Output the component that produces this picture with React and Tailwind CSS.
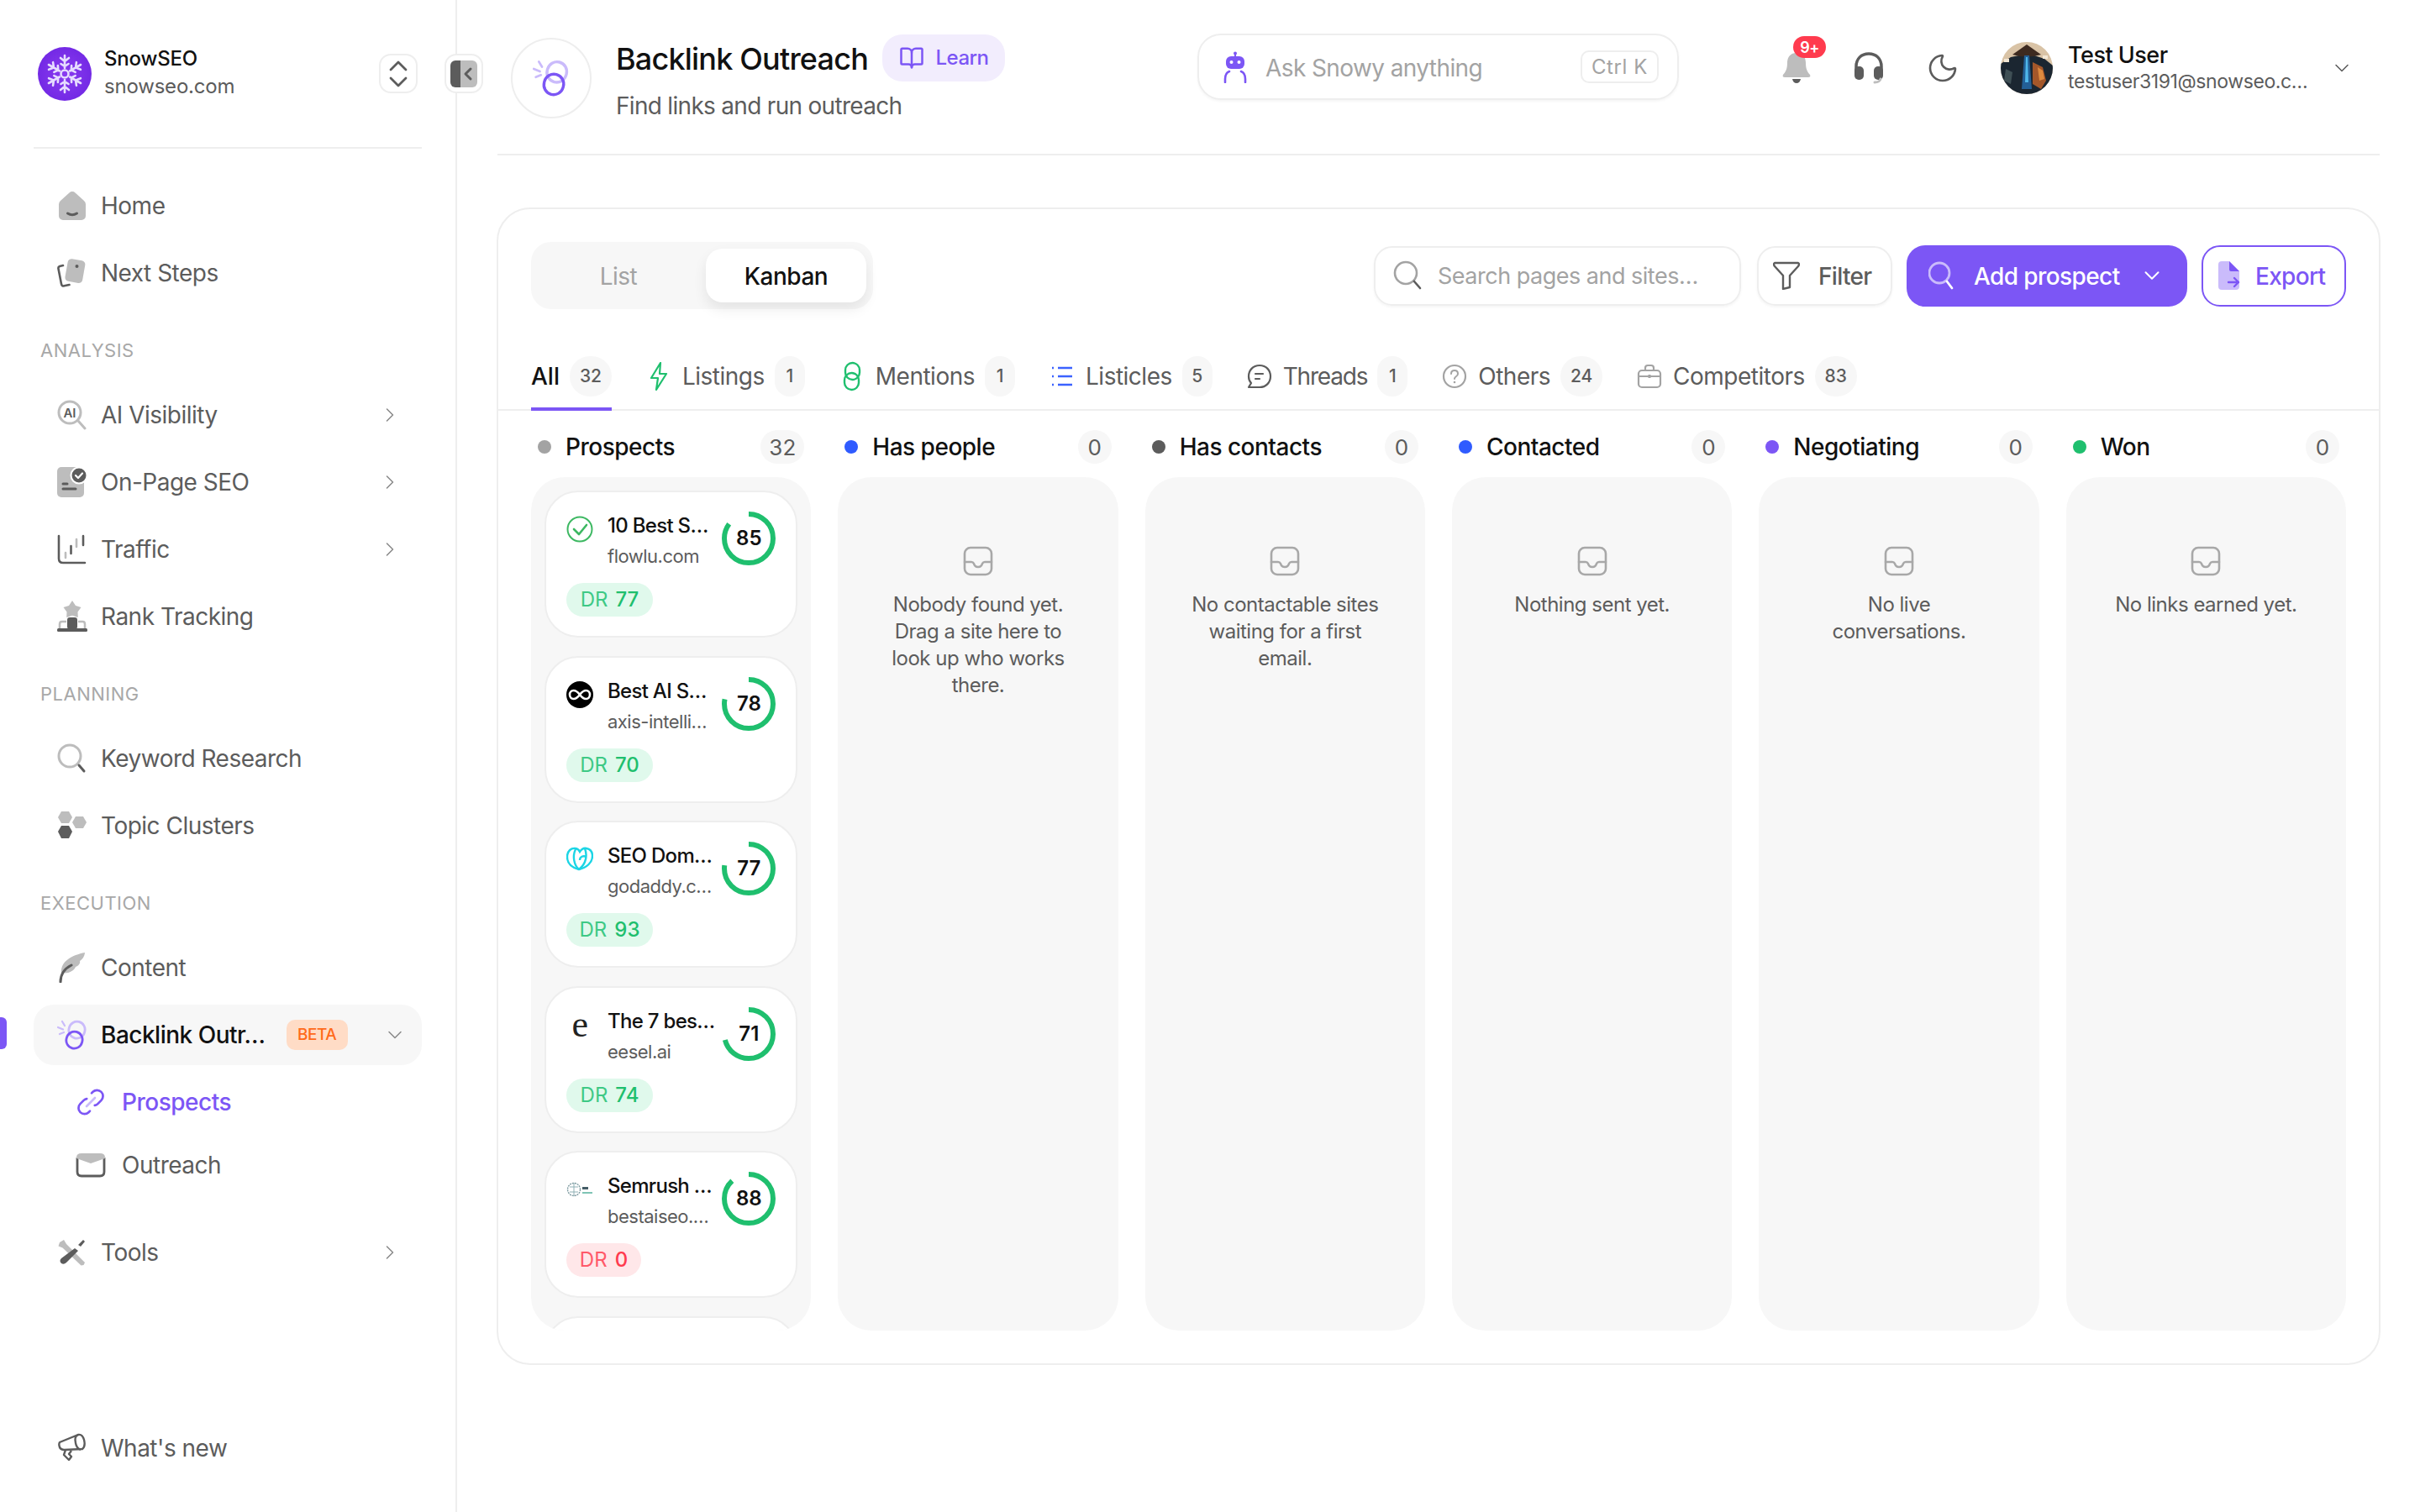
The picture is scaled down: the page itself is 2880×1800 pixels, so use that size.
import React from "react";
import { ChevronRight, ChevronDown, BookOpen, Moon } from "lucide-react";

const D = "#5c5c5c";
const L = "#bdbdbd";
const P = "#7c56f5";
const PL = "#cabbfb";
const G = "#1fbf6e";

const Svg = ({ w = 32, h = 32, vb, children, className = "" }) => (
  <svg width={w} height={h} viewBox={vb || `0 0 ${w} ${h}`} fill="none" className={`shrink-0 ${className}`}>
    {children}
  </svg>
);

const HomeI = () => (
  <Svg w={32} h={34}>
    <path d="M12.5 1.5a5 5 0 0 1 7 0l10 9a6 6 0 0 1 2.5 4.5V29a5 5 0 0 1-5 5H5a5 5 0 0 1-5-5V15a6 6 0 0 1 2.5-4.5z" fill={L} />
    <path d="M10.5 26q5.500 3.500 11 0" stroke={D} strokeWidth="3" strokeLinecap="round" />
  </Svg>
);
const NextI = () => (
  <Svg w={36} h={36}>
    <path d="M7 9 3 10q-2 .7-1.500 3l3.500 18q.5 3 3.500 2.300l6-1.300" stroke={D} strokeWidth="2.600" strokeLinecap="round" />
    <rect x="11" y="2" width="21" height="27" rx="4.500" fill={L} transform="rotate(10 21 15)" />
    <circle cx="23.500" cy="10" r="2" fill={D} />
  </Svg>
);
const AiI = () => (
  <Svg w={36} h={36}>
    <circle cx="15" cy="15" r="13" stroke={L} strokeWidth="3" />
    <path d="m25 25 8 9" stroke={L} strokeWidth="3" strokeLinecap="round" />
    <text x="15" y="20.500" textAnchor="middle" fontFamily="Inter, sans-serif" fontWeight="600" fontSize="15" letterSpacing="0" fill={D}>AI</text>
  </Svg>
);
const PageI = () => (
  <Svg w={36} h={36}>
    <rect x="0" y="0" width="32" height="36" rx="5" fill={L} />
    <path d="M7 20h5M7 26h15" stroke={D} strokeWidth="3" strokeLinecap="round" />
    <circle cx="26" cy="10" r="9.500" fill={D} stroke="#fff" strokeWidth="2" />
    <path d="m22 10 3 3 5-5.500" stroke="#fff" strokeWidth="2.200" strokeLinecap="round" strokeLinejoin="round" />
  </Svg>
);
const TrafficI = () => (
  <Svg w={36} h={36}>
    <path d="M2 2v27q0 5 5 5h26" stroke={D} strokeWidth="2.600" strokeLinecap="round" />
    <path d="M10 22v6M23 6v9" stroke={L} strokeWidth="2.600" strokeLinecap="round" />
    <path d="M16.500 14v9M31 2v11" stroke={D} strokeWidth="2.600" strokeLinecap="round" />
  </Svg>
);
const RankI = () => (
  <Svg w={36} h={38}>
    <path d="m18 0 4 6 6.500 2-4 5.500.3 6.500-6.800-2.200L11.200 20l.3-6.500-4-5.500L14 6z" fill={L} />
    <rect x="12" y="20" width="12" height="14" rx="3" fill={D} />
    <path d="M11 25H5.500Q3 25 3 28v5M25 25h5.500Q33 25 33 28v5" stroke={L} strokeWidth="2.500" />
    <rect x="0" y="33" width="36" height="4" rx="1.500" fill={D} />
  </Svg>
);
const KeyI = () => (
  <Svg w={36} h={36}>
    <circle cx="15" cy="15" r="13" stroke={L} strokeWidth="3" />
    <path d="m26 26 6 7" stroke={D} strokeWidth="3" strokeLinecap="round" />
  </Svg>
);
const TopicI = () => (
  <Svg w={36} h={36}>
    <path d="M5 1h9l4 7-4 7H5L1 8z" fill={L} strokeLinejoin="round" />
    <path d="M22 7h9l4 7-4 7h-9l-4-7z" fill={L} />
    <path d="M5 18h9l4 7-4 8H5l-4-8z" fill={D} />
  </Svg>
);
const ContentI = () => (
  <Svg w={32} h={36}>
    <path d="M3 24C2 10 16 3 31 0c-.5 5-3 8-6 10 1 3-2 6-5 7-2 5-10 9-17 7z" fill={L} />
    <path d="M2 35c0-8 3-15 13-20" stroke={D} strokeWidth="3" strokeLinecap="round" />
  </Svg>
);
const LinkDuo = ({ w = 36, h = 36 }) => (
  <Svg w={w} h={h} vb="0 0 36 36">
    <path d="M1 9l6 2.500M3 17l5-2M6 2l3 5" stroke={PL} strokeWidth="2.200" strokeLinecap="round" />
    <rect x="14" y="2" width="19" height="20" rx="9.500" stroke={PL} strokeWidth="2.800" transform="rotate(15 23 12)" />
    <rect x="11" y="14" width="19" height="20" rx="9.500" stroke={P} strokeWidth="2.800" transform="rotate(15 20 24)" />
  </Svg>
);
const ProsI = () => (
  <Svg w={36} h={34} vb="0 0 24 24">
    <path d="M12.700 4.500l1.100-1.100a5 5 0 0 1 7.070 7.070l-3 3a5 5 0 0 1-2.500 1.300" stroke={P} strokeWidth="1.900" strokeLinecap="round" />
    <path d="M11.300 19.500l-1.100 1.100a5 5 0 0 1-7.070-7.070l3-3a5 5 0 0 1 2.500-1.300" stroke={P} strokeWidth="1.900" strokeLinecap="round" />
    <path d="M8.500 15.500l7-7" stroke={PL} strokeWidth="1.900" strokeLinecap="round" />
  </Svg>
);
const MailI = () => (
  <Svg w={36} h={32}>
    <path d="M2 7v17q0 5 5 5h22q5 0 5-5V7" stroke={D} strokeWidth="2.800" />
    <path d="M1 7q0-5 6-5h22q6 0 6 5v1L18 14 1 8z" fill={L} />
  </Svg>
);
const ToolsI = () => (
  <Svg w={34} h={34}>
    <path d="M2 5 7 2l3 5 20 20 2 2-1.500 3-3 .5-22-21-5-2z" fill={L} />
    <path d="M30 2l2 2-5 6-3-2zM20 12l4 3-14 14q-3 3-6 1-3-3 0-6z" fill={D} />
  </Svg>
);
const MegaI = () => (
  <Svg w={34} h={36}>
    <path d="M2 11 24 2q5-1 7 6 2 8-2 11l-22 1q-5-.5-5.500-5Q1 13 2 11z" stroke={D} strokeWidth="2.400" strokeLinejoin="round" />
    <path d="M24 2q-5 2-3 10 1 6 6 8" stroke={D} strokeWidth="2.400" />
    <path d="M9 20 7 26l6 6 3-4-3-3 3-4" stroke={D} strokeWidth="2.400" strokeLinejoin="round" />
  </Svg>
);

const Flake = () => (
  <svg width="44" height="48" viewBox="-22 -24 44 48" fill="none" stroke="#e6dcff" strokeWidth="2.600" strokeLinecap="round">
    <circle r="4.500" />
    {[0, 60, 120, 180, 240, 300].map((r) => (
      <g key={r} transform={`rotate(${r})`}>
        <path d="M0-7V-22M-5-19l5 4 5-4M-4.500-12 0-9l4.500-3" />
      </g>
    ))}
  </svg>
);

const NavRow = ({ icon, label, chev, className = "" }) => (
  <div className={`flex h-[72px] items-center rounded-[24px] pl-7 pr-6 ${className}`}>
    <div className="flex w-[36px] shrink-0 items-center justify-center">{icon}</div>
    <span className="ml-4 text-[28px] text-[#5c5c5c]">{label}</span>
    {chev && <ChevronRight size={28} strokeWidth={1.3} color="#8a8a8a" className="ml-auto" />}
  </div>
);

const Label = ({ children }) => (
  <div className="mt-10 mb-[25px] flex h-8 items-center pl-2 text-[22px] tracking-[0.5px] text-[#a8a8a8]">{children}</div>
);

const Sidebar = () => (
  <aside className="relative flex h-[1800px] w-[544px] shrink-0 flex-col border-r-2 border-[#eeeeee] px-10">
    <div className="flex h-[177px] shrink-0 items-start border-b-2 border-[#eeeeee] pt-14 pl-[5px]">
      <div className="flex h-16 w-16 shrink-0 items-center justify-center rounded-full bg-[radial-gradient(circle,#8a3cf0,#6a22e0)]">
        <Flake />
      </div>
      <div className="ml-[15px] -mt-0.5 flex flex-col">
        <span className="text-[24px] leading-[32px] font-medium tracking-[-0.2px] text-[#111111]">SnowSEO</span>
        <span className="text-[24px] leading-[34px] tracking-[-0.2px] text-[#5c5c5c]">snowseo.com</span>
      </div>
      <div className="mt-2 ml-auto mr-[5px] flex h-[47px] w-[46px] items-center justify-center rounded-[14px] border-2 border-[#eeeeee] bg-white">
        <svg width="22" height="32" viewBox="0 0 22 32" fill="none" stroke={D} strokeWidth="2.800" strokeLinecap="round" strokeLinejoin="round">
          <path d="m2 11 9-9 9 9M2 21l9 9 9-9" />
        </svg>
      </div>
    </div>
    <div className="absolute top-16 left-[529px] flex h-[47px] w-[46px] items-center justify-center rounded-[14px] border-2 border-[#eeeeee] bg-white">
      <svg width="32" height="32" viewBox="0 0 32 32">
        <path d="M12 0H6a6 6 0 0 0-6 6v20a6 6 0 0 0 6 6h6z" fill={D} />
        <path d="M12 0h14a6 6 0 0 1 6 6v20a6 6 0 0 1-6 6H12z" fill={L} />
        <path d="m24 10-6 6 6 6" stroke={D} strokeWidth="3" strokeLinecap="round" strokeLinejoin="round" fill="none" />
      </svg>
    </div>

    <div className="mt-8 flex flex-col gap-2">
      <NavRow icon={<HomeI />} label="Home" />
      <NavRow icon={<NextI />} label="Next Steps" />
    </div>
    <Label>ANALYSIS</Label>
    <div className="flex flex-col gap-2">
      <NavRow icon={<AiI />} label="AI Visibility" chev />
      <NavRow icon={<PageI />} label="On-Page SEO" chev />
      <NavRow icon={<TrafficI />} label="Traffic" chev />
      <NavRow icon={<RankI />} label="Rank Tracking" />
    </div>
    <Label>PLANNING</Label>
    <div className="flex flex-col gap-2">
      <NavRow icon={<KeyI />} label="Keyword Research" />
      <NavRow icon={<TopicI />} label="Topic Clusters" />
    </div>
    <Label>EXECUTION</Label>
    <div className="flex flex-col gap-2">
      <NavRow icon={<ContentI />} label="Content" />
      <div className="relative flex h-[72px] items-center rounded-[24px] bg-[#f7f7f7] pl-7 pr-[18px]">
        <div className="absolute top-[15px] -left-10 h-[38px] w-2 rounded-r-[6px] bg-[#7c56f5]" />
        <div className="flex w-[36px] shrink-0 items-center justify-center"><LinkDuo /></div>
        <span className="ml-4 text-[28px] font-medium text-[#111111]">Backlink Outr…</span>
        <span className="ml-[25px] flex h-[36px] w-[73px] items-center justify-center rounded-[10px] bg-[#ffdcc6] text-[19px] font-medium text-[#ff6a1a]">BETA</span>
        <ChevronDown size={28} strokeWidth={1.3} color="#8a8a8a" className="ml-auto" />
      </div>
    </div>
    <div className="mt-[10px] flex flex-col gap-[7px] pl-[50px]">
      <div className="flex h-[68px] items-center">
        <ProsI /><span className="ml-[19px] text-[28px] font-medium text-[#7c56f5]">Prospects</span>
      </div>
      <div className="flex h-[68px] items-center">
        <MailI /><span className="ml-[19px] text-[28px] text-[#5c5c5c]">Outreach</span>
      </div>
    </div>
    <div className="mt-[34px]"><NavRow icon={<ToolsI />} label="Tools" chev /></div>
    <div className="mt-auto pb-10"><NavRow icon={<MegaI />} label="What's new" /></div>
  </aside>
);

const Robot = () => (
  <Svg w={28} h={38}>
    <circle cx="14" cy="2.500" r="2" fill={P} />
    <path d="M14 3v4" stroke={P} strokeWidth="2" />
    <rect x="3" y="6" width="22" height="15" rx="6" fill={P} />
    <circle cx="9.500" cy="13" r="2" fill="#fff" /><circle cx="18.500" cy="13" r="2" fill="#fff" />
    <path d="M2 37v-4q0-7 5-9M26 37v-4q0-7-5-9" stroke={P} strokeWidth="2.600" strokeLinecap="round" />
  </Svg>
);
const Bell = () => (
  <div className="relative flex h-[36px] w-[36px] items-center justify-center">
    <svg width="34" height="36" viewBox="0 0 34 36">
      <path d="M17 0C9 0 6 6 6 12c0 7-2 11-5 14-1 2 0 3 2 3h28c2 0 3-1 2-3-3-3-5-7-5-14 0-6-3-12-11-12z" fill={L} />
      <path d="M12 31h10q-1 5-5 5t-5-5z" fill={D} />
    </svg>
    <span className="absolute -top-5 left-[14px] flex h-[26px] w-[39px] items-center justify-center rounded-full bg-[#ff3b4e] text-[18px] font-semibold text-white">9+</span>
  </div>
);
const Headset = () => (
  <Svg w={36} h={38}>
    <path d="M3 22v-5C3 8 9 2 18 2s15 6 15 15v5" stroke={D} strokeWidth="3.500" />
    <rect x="1" y="17" width="11" height="16" rx="5" fill={D} />
    <rect x="24" y="17" width="11" height="16" rx="5" fill={D} />
    <path d="M32 32q-1 4-7 4" stroke={L} strokeWidth="3" strokeLinecap="round" />
  </Svg>
);
const Avatar = () => (
  <div className="h-[62px] w-[62px] shrink-0 overflow-hidden rounded-full">
    <svg width="62" height="62" viewBox="0 0 62 62">
      <rect width="62" height="62" fill="#d9c3a6" />
      <path d="M0 26 12 18l10-2 18 0 12 4 10 8v34H0z" fill="#1b2631" />
      <path d="M14 15 31 3l17 12q-17 5-34 0z" fill="#3d2a20" />
      <path d="M28 16h6l3 40h-12z" fill="#235f96" />
      <path d="M30 18h2l1 30h-4z" fill="#4fb7ea" />
      <path d="M38 24l12 6 4 16-6 10-10-6z" fill="#a4572a" />
      <path d="M44 30l6 4 2 10-6 2z" fill="#dd8a3f" />
      <path d="M6 32l8 4-2 14-8-4z" fill="#3f4f55" />
      <path d="M50 16h6v4h-6zM4 20h6v4H4z" fill="#f2e6d4" />
    </svg>
  </div>
);

const Header = () => (
  <header className="flex h-[185px] shrink-0 items-start border-b-2 border-[#eeeeee] pl-4">
    <div className="mt-[45px] flex h-[96px] w-[96px] shrink-0 items-center justify-center rounded-full border-2 border-[#eeeeee]">
      <LinkDuo w={44} h={46} />
    </div>
    <div className="mt-10 ml-[29px] flex w-[465px] shrink-0 flex-col">
      <div className="flex items-center">
        <span className="pt-0.5 text-[36px] leading-[56px] font-medium tracking-[-0.8px] whitespace-nowrap text-[#111111]">Backlink Outreach</span>
        <div className="ml-[17px] flex h-14 w-[146px] shrink-0 items-center justify-center gap-[14px] rounded-[24px] bg-[#f2edfd]">
          <BookOpen size={30} strokeWidth={2} color={P} />
          <span className="text-[24px] font-medium text-[#7c56f5]">Learn</span>
        </div>
      </div>
      <span className="mt-2 text-[28px] leading-[40px] tracking-[-0.7px] whitespace-nowrap text-[#5c5c5c]">Find links and run outreach</span>
    </div>
    <div className="mt-10 ml-[227px] flex h-[79px] w-[573px] shrink-0 items-center rounded-[28px] border-2 border-[#eeeeee] pr-[22px] pl-[29px] shadow-[0_2px_3px_rgba(0,0,0,0.04)]">
      <Robot />
      <span className="ml-[22px] pt-0.5 text-[28px] tracking-[-0.6px] text-[#a3a3a3]">Ask Snowy anything</span>
      <span className="ml-auto flex h-[39px] w-[93px] items-center justify-center rounded-[10px] border-2 border-[#eeeeee] text-[24px] tracking-[0.6px] text-[#a3a3a3]">Ctrl K</span>
    </div>
    <div className="mt-[50px] ml-[122px] flex h-[62px] flex-1 items-center">
      <Bell />
      <div className="ml-[50px]"><Headset /></div>
      <Moon size={40} strokeWidth={1.6} color={D} className="ml-[50px]" />
      <div className="ml-[49px]"><Avatar /></div>
      <div className="ml-[18px] flex w-[297px] flex-col">
        <span className="text-[27px] leading-[32px] font-medium text-[#111111]">Test User</span>
        <span className="text-[23px] leading-[30px] tracking-[-0.4px] whitespace-nowrap text-[#5c5c5c]">testuser3191@snowseo.c…</span>
      </div>
      <ChevronDown size={28} strokeWidth={1.3} color="#5c5c5c" className="ml-[15px]" />
    </div>
  </header>
);

const Toolbar = () => (
  <div className="mx-[39px] mt-[39px] flex h-20 items-center">
    <div className="flex h-20 w-[407px] items-center rounded-[24px] bg-[#f7f7f7] pr-2">
      <span className="w-[208px] pt-0.5 text-center text-[28px] text-[#a3a3a3]">List</span>
      <span className="flex h-16 w-[191px] items-center justify-center rounded-[20px] bg-white pt-0.5 text-[28px] font-medium text-[#111111] shadow-[0_8px_16px_rgba(0,0,0,0.08)]">Kanban</span>
    </div>
    <div className="ml-auto flex h-[71px] w-[437px] items-center rounded-[22px] border-2 border-[#eeeeee] pl-[21px] shadow-[0_2px_3px_rgba(0,0,0,0.04)]">
      <Svg w={34} h={36}><circle cx="15" cy="15" r="13" stroke="#a3a3a3" strokeWidth="2.600" /><path d="m25 25 7 8" stroke="#5c5c5c" strokeWidth="2.600" strokeLinecap="round" /></Svg>
      <span className="ml-[19px] pt-0.5 text-[27px] text-[#a3a3a3]">Search pages and sites…</span>
    </div>
    <div className="ml-[19px] flex h-[71px] w-[161px] items-center rounded-[22px] border-2 border-[#eeeeee] pl-[17px] shadow-[0_2px_3px_rgba(0,0,0,0.04)]">
      <Svg w={32} h={34}><path d="M2 2h28q2 1 0 4L20 17v14l-8 2V17L2 6q-2-3 0-4z" stroke="#5c5c5c" strokeWidth="2.400" strokeLinejoin="round" /></Svg>
      <span className="ml-[22px] pt-0.5 text-[28px] font-medium tracking-[-0.7px] text-[#5c5c5c]">Filter</span>
    </div>
    <div className="ml-[17px] flex h-[73px] w-[334px] items-center rounded-[22px] bg-[#7c56f5] pl-[26px]">
      <Svg w={30} h={36}><circle cx="13" cy="15" r="12" stroke={PL} strokeWidth="2.800" /><path d="m22 25 6 8" stroke="#fff" strokeWidth="2.800" strokeLinecap="round" /></Svg>
      <span className="ml-6 pt-0.5 text-[28px] font-medium tracking-[-0.6px] text-white">Add prospect</span>
      <ChevronDown size={30} strokeWidth={1.6} color="#fff" className="ml-[23px]" />
    </div>
    <div className="ml-[17px] flex h-[73px] w-[172px] items-center rounded-[22px] border-2 border-[#7c56f5] pl-[18px]">
      <Svg w={26} h={34}>
        <path d="M0 4q0-4 4-4h9l12 12v18q0 4-4 4H4q-4 0-4-4z" fill={PL} />
        <path d="M13 0l12 12H15q-2 0-2-2z" fill={P} />
        <path d="M12 25h12M19 20l5 5-5 5" stroke={P} strokeWidth="2.400" strokeLinecap="round" strokeLinejoin="round" />
      </Svg>
      <span className="ml-[18px] pt-0.5 text-[28px] font-medium tracking-[-0.7px] text-[#7c56f5]">Export</span>
    </div>
  </div>
);

const Count = ({ children, wide }) => (
  <span className={`ml-3 flex h-12 items-center justify-center rounded-full bg-[#f7f7f7] text-[21px] font-medium tracking-normal text-[#5c5c5c] ${wide ? "w-[50px]" : "w-9"}`}>{children}</span>
);
const Tab = ({ icon, label, n, tight }) => (
  <div className="ml-10 flex items-center">
    <div className="mr-3 flex h-8 w-8 items-center justify-center">{icon}</div>
    <span className={`text-[28px] text-[#5c5c5c] ${tight ? "tracking-[-1.2px]" : ""}`}>{label}</span>
    <Count wide={n.length > 1}>{n}</Count>
  </div>
);

const Tabs = () => (
  <div className="mt-14 flex h-[65px] items-start border-b-2 border-[#eeeeee] pl-[39px]">
    <div className="flex h-[65px] items-start border-b-4 border-[#7c56f5]">
      <span className="text-[28px] leading-[48px] font-medium tracking-normal text-[#111111]">All</span>
      <Count wide>32</Count>
    </div>
    <div className="flex h-12 items-center">
      <Tab n="1" label="Listings" icon={<Svg w={22} h={34}><path d="M13 1 2 19h8l-2 14 12-19h-8z" stroke={G} strokeWidth="2.200" strokeLinejoin="round" /></Svg>} />
      <Tab n="1" label="Mentions" icon={<Svg w={24} h={36} vb="0 0 24 36"><rect x="4" y="2" width="17" height="20" rx="8.500" stroke={G} strokeWidth="2.400" /><rect x="3" y="14" width="17" height="20" rx="8.500" stroke={G} strokeWidth="2.400" /></Svg>} />
      <Tab n="5" label="Listicles" icon={<Svg w={26} h={26}><path d="M8 3h17M8 13h17M8 23h17" stroke="#3b62ff" strokeWidth="2.400" /><path d="M1 3h2M1 13h2M1 23h2" stroke="#3b62ff" strokeWidth="2.400" /></Svg>} />
      <Tab n="1" tight label="Threads" icon={<Svg w={30} h={30}><path d="M15 2c8 0 13 6 13 13s-5 13-13 13H2l3-5C3 21 2 18 2 15 2 8 7 2 15 2z" stroke={D} strokeWidth="2.200" strokeLinejoin="round" /><path d="M10 12h9M10 18h5" stroke={D} strokeWidth="2.200" strokeLinecap="round" /></Svg>} />
      <Tab n="24" label="Others" icon={<Svg w={30} h={30}><circle cx="15" cy="15" r="13" stroke="#a3a3a3" strokeWidth="2.200" /><path d="M11 12q0-4 4-4t4 4q0 2-2.500 3.500Q15 16.500 15 18" stroke="#a3a3a3" strokeWidth="2" strokeLinecap="round" /><circle cx="15" cy="22" r="1.300" fill="#a3a3a3" /></Svg>} />
      <Tab n="83" label="Competitors" icon={<Svg w={30} h={30}><rect x="2" y="8" width="26" height="20" rx="4" stroke="#a3a3a3" strokeWidth="2.200" /><path d="M10 8V5q0-3 3-3h4q3 0 3 3v3M2 15h26" stroke="#a3a3a3" strokeWidth="2.200" /><path d="M15 13v4" stroke="#a3a3a3" strokeWidth="3" /></Svg>} />
    </div>
  </div>
);

const Ring = ({ v }) => {
  const r = 29;
  const c = 2 * Math.PI * r;
  return (
    <div className="relative flex h-16 w-16 shrink-0 items-center justify-center">
      <svg width="64" height="64" className="absolute -rotate-90">
        <circle cx="32" cy="32" r={r} fill="none" stroke={G} strokeWidth="6" style={{ strokeDasharray: `${(c * v) / 100} ${c}` }} />
      </svg>
      <span className="text-[24px] font-semibold tracking-normal text-[#111111]">{v}</span>
    </div>
  );
};

const Fav1 = () => (
  <Svg w={32} h={32}><circle cx="16" cy="16" r="14.500" stroke="#3db862" strokeWidth="2" /><path d="m9 16 6 6 9-11" stroke="#3db862" strokeWidth="2.600" strokeLinecap="round" strokeLinejoin="round" /></Svg>
);
const Fav2 = () => (
  <Svg w={32} h={32}><circle cx="16" cy="16" r="16" fill="#000" /><path d="M16 16c-3-4-5-5-7.500-5C6 11 4 13 4 16s2 5 4.500 5c2.500 0 4.500-1 7.500-5 3-4 5-5 7.500-5 2.500 0 4.500 2 4.500 5s-2 5-4.500 5c-2.500 0-4.500-1-7.500-5z" stroke="#fff" strokeWidth="2.600" /></Svg>
);
const Fav3 = () => (
  <Svg w={32} h={32}><path d="M15 28C7 26 1 21 1 13 1 6 6 2 11 3c2 .3 4 2 5 4 2-3 5-5 8-4 5 1 7 5 7 9 0 8-7 14-16 16z" stroke="#1bd5e5" strokeWidth="2.400" /><path d="M11 4C7 12 9 23 15 28M24 13c-4-2-8 0-8 4M22 3c3 8 2 18-7 25" stroke="#1bd5e5" strokeWidth="2.400" /></Svg>
);
const Fav4 = () => (
  <div className="flex h-8 w-8 shrink-0 items-center justify-center [font-family:'Liberation_Serif',serif] text-[44px] leading-[32px] text-[#222222]">e</div>
);
const Fav5 = () => (
  <Svg w={34} h={32}><circle cx="9" cy="16" r="7.500" stroke="#7d9aa0" strokeWidth="1.400" strokeDasharray="2 1" /><path d="M9 8v16M4 13h10M4 19h10" stroke="#8fb0b5" strokeWidth="1" /><path d="M19 13h7v3h-7z" fill="#455d66" /><path d="M19 19h12v2H19z" fill="#7fc4b5" /></Svg>
);

const ProspectCard = ({ fav, title, domain, score, dr, bad }) => (
  <div className="flex h-[175px] shrink-0 flex-col rounded-[40px] border-2 border-[#eeeeee] bg-white px-6 pt-[23px]">
    <div className="flex">
      <div className="mt-[5px] w-8 shrink-0">{fav}</div>
      <div className="ml-[17px] flex w-[122px] shrink-0 flex-col">
        <span className="pt-px text-[24px] leading-[32px] font-medium tracking-[-0.7px] whitespace-nowrap text-[#111111]">{title}</span>
        <span className="mt-1 text-[22px] leading-[32px] whitespace-nowrap text-[#5c5c5c]">{domain}</span>
      </div>
      <div className="ml-auto"><Ring v={score} /></div>
    </div>
    <div className={`mt-4 flex h-10 items-center justify-center self-start rounded-full text-[24px] tracking-normal ${bad ? "w-[89px] bg-[#ffe7e9] text-[#ff5a69]" : "w-[103px] bg-[#e0f9ec] text-[#3ec985]"}`}>
      <span>DR</span>
      <span className={`ml-[9px] font-medium ${bad ? "text-[#ff3b4e]" : "text-[#1fbf6e]"}`}>{dr}</span>
    </div>
  </div>
);

const cards = [
  { fav: <Fav1 />, title: "10 Best S…", domain: "flowlu.com", score: 85, dr: 77 },
  { fav: <Fav2 />, title: "Best AI S…", domain: "axis-intelli…", score: 78, dr: 70 },
  { fav: <Fav3 />, title: "SEO Dom…", domain: "godaddy.c…", score: 77, dr: 93 },
  { fav: <Fav4 />, title: "The 7 bes…", domain: "eesel.ai", score: 71, dr: 74 },
  { fav: <Fav5 />, title: "Semrush …", domain: "bestaiseo.…", score: 88, dr: 0, bad: true },
];

const ColHead = ({ dot, label, n, wide }) => (
  <div className="mb-4 flex h-10 items-center px-2">
    <span className={`h-4 w-4 rounded-full ${dot}`} />
    <span className="ml-[17px] text-[28px] font-medium text-[#111111]">{label}</span>
    <span className={`ml-auto flex h-10 items-center justify-center rounded-full bg-[#f7f7f7] text-[26px] tracking-normal text-[#5c5c5c] ${wide ? "w-[52px]" : "w-10"}`}>{n}</span>
  </div>
);

const Tray = () => (
  <svg width="36" height="36" viewBox="0 0 36 36" fill="none" stroke="#a8a8a8" strokeWidth="2.600" strokeLinecap="round" strokeLinejoin="round">
    <rect x="2" y="2" width="32" height="32" rx="7" />
    <path d="M2 19h8q2 0 3 2 1 4 5 4t5-4q1-2 3-2h8" />
  </svg>
);

const EmptyCol = ({ dot, label, text }) => (
  <div className="flex min-w-0 flex-col">
    <ColHead dot={dot} label={label} n="0" />
    <div className="flex h-[1016px] flex-col items-center rounded-[40px] bg-[#f7f7f7] px-[52px] pt-[82px]">
      <Tray />
      <p className="mt-[18px] text-center text-[24px] leading-[32px] text-[#5c5c5c]">{text}</p>
    </div>
  </div>
);

export default function App() {
  return (
    <div className="flex h-[1800px] w-[2880px] overflow-hidden bg-white tracking-[-0.5px] [font-family:Inter,sans-serif]">
      <Sidebar />
      <main className="flex min-w-0 flex-1 flex-col px-12">
        <Header />
        <section className="-mx-px mt-[62px] h-[1378px] rounded-[40px] border-2 border-[#eeeeee]">
          <Toolbar />
          <Tabs />
          <div className="mx-[39px] mt-[23px] grid grid-cols-6 gap-8">
            <div className="flex min-w-0 flex-col">
              <ColHead dot="bg-[#a3a3a3]" label="Prospects" n="32" wide />
              <div className="flex h-[1016px] flex-col gap-[21.5px] overflow-hidden rounded-[40px] bg-[#f7f7f7] px-4 pt-4">
                {cards.map((c) => <ProspectCard key={c.title} {...c} />)}
                <div className="h-[174px] shrink-0 rounded-[40px] border-2 border-[#eeeeee] bg-white" />
              </div>
            </div>
            <EmptyCol dot="bg-[#2f5bff]" label="Has people" text="Nobody found yet. Drag a site here to look up who works there." />
            <EmptyCol dot="bg-[#5c5c5c]" label="Has contacts" text="No contactable sites waiting for a first email." />
            <EmptyCol dot="bg-[#2f5bff]" label="Contacted" text="Nothing sent yet." />
            <EmptyCol dot="bg-[#7c56f5]" label="Negotiating" text="No live conversations." />
            <EmptyCol dot="bg-[#1fbf6e]" label="Won" text="No links earned yet." />
          </div>
        </section>
      </main>
    </div>
  );
}
